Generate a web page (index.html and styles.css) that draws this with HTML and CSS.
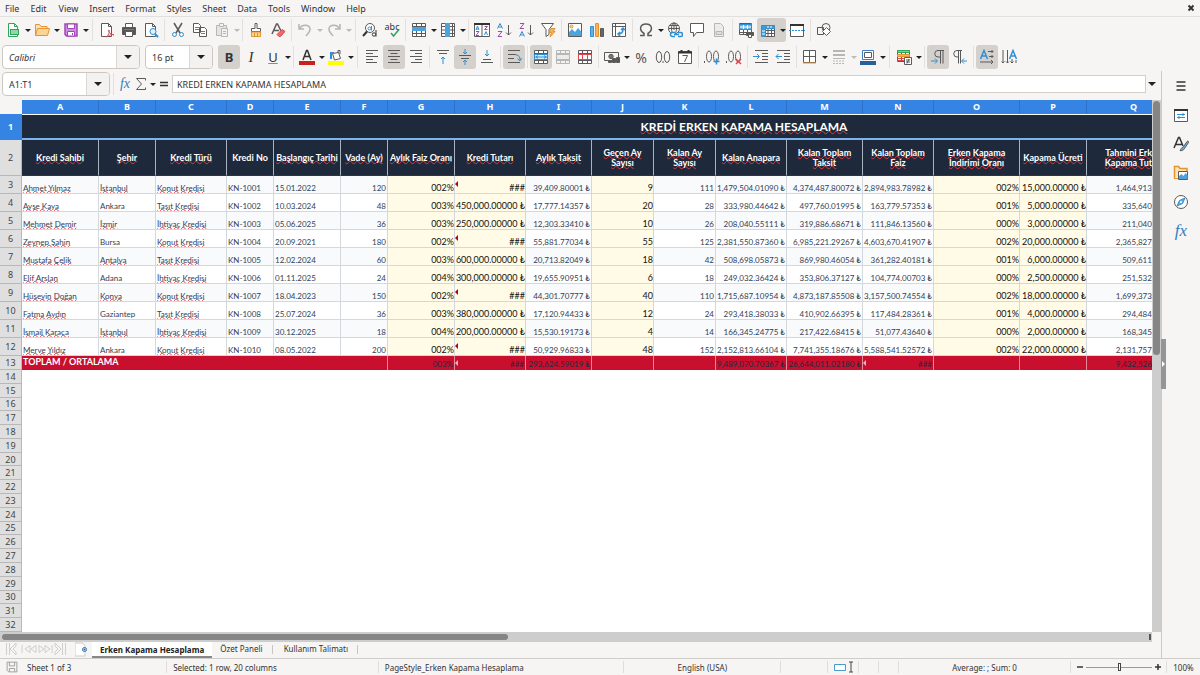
FILE: index.html
```html
<!DOCTYPE html>
<html lang="tr">
<head>
<meta charset="utf-8">
<title>Kredi Erken Kapama Hesaplama</title>
<link rel="stylesheet" href="styles.css">
</head>
<body>
<nav class="menubar" aria-label="Menu">
<button>File</button><button>Edit</button><button>View</button><button>Insert</button><button>Format</button><button>Styles</button><button>Sheet</button><button>Data</button><button>Tools</button><button>Window</button><button>Help</button>
<button class="close" aria-label="Close"><svg class="ic s8" viewBox="0 0 8 8"><path class="k w2" d="M1.500 1.500l5 5M6.500 1.500l-5 5"/></svg></button>
</nav>

<div class="toolbar" role="toolbar" aria-label="Standard">
<button class="tb" aria-label="New"><svg class="ic" viewBox="0 0 16 16"><path class="g" fill="#fff" d="M3.500 1.500h6l3 3v10h-9z"/><path class="g" d="M9.500 1.500v3h3"/><path class="fg" d="M5 7h9v6H5z"/><path stroke="#fff" d="M6 9h7M6 11h7"/></svg></button><button class="dd" aria-label="New options"></button>
<button class="tb" aria-label="Open"><svg class="ic" viewBox="0 0 16 16"><path class="o" fill="#fce3b4" d="M1.500 13.500v-11h4l1.500 2h6v3"/><path class="o" fill="#fbd591" d="M3.500 6.500h12l-2 7h-12z"/></svg></button><button class="dd" aria-label="Open options"></button>
<button class="tb" aria-label="Save"><svg class="ic" viewBox="0 0 16 16"><path class="p" fill="#c792d6" stroke-width="1.5" d="M2 2h12v12H3.500L2 12.500z"/><path fill="#fff" class="p" d="M4.500 2h7v4.500h-7zM4.500 9.500h7V14h-7z"/><path class="p" d="M9.500 11v2"/></svg></button><button class="dd" aria-label="Save options"></button>
<i class="sep wide"></i>
<button class="tb" aria-label="Export as PDF"><svg class="ic" viewBox="0 0 16 16"><path fill="#fff" d="M2.500 1.500h7l3 3v10h-10z"/><path d="M9.500 1.500v3h3"/><path class="r" d="M7.500 15c2-2 3.500-5 2.500-7-1.500 0 0 4 5 5-2-1.500-5 .5-7.500 2z"/></svg></button>
<button class="tb" aria-label="Print"><svg class="ic" viewBox="0 0 16 16"><path fill="#fff" d="M4.500 5V1.500h7V5"/><path fill="#555" d="M1.500 5.500h13v7h-13z"/><path class="b" d="M3 7.500h10"/><path fill="#fff" d="M4.500 9.500h7v5h-7z"/></svg></button>
<button class="tb" aria-label="Print preview"><svg class="ic" viewBox="0 0 16 16"><path fill="#fff" d="M2.500 1.500h7l3 3v10h-10z"/><path d="M9.500 1.500v3h3"/><circle class="b" fill="#e3f1fb" cx="10" cy="9.500" r="3"/><path class="b w2" d="M12 12l3 3"/></svg></button>
<i class="sep"></i>
<button class="tb" aria-label="Cut"><svg class="ic" viewBox="0 0 16 16"><path class="w15" d="M4 1l6 10M12 1L6 11"/><circle class="b" cx="4.500" cy="12.500" r="2"/><circle class="b" cx="11.500" cy="12.500" r="2"/></svg></button>
<button class="tb" aria-label="Copy"><svg class="ic" viewBox="0 0 16 16"><path fill="#fff" d="M1.500 1.500h5l2 2v7h-7zM7.500 5.500h5l2 2v7h-7z"/><path class="b" d="M3 5.500h4M3 7.500h4M9 9.500h4M9 11.500h4"/></svg></button>
<button class="tb off" aria-label="Paste"><svg class="ic" viewBox="0 0 16 16"><path fill="#ccc" d="M2.500 3.500h10v10h-10z"/><path fill="#eee" d="M5.500 1.500h4v3h-4zM7.500 6.500h6v8h-6z"/><path d="M9 9.500h3M9 11.500h3"/></svg></button><button class="dd off" aria-label="Paste options"></button>
<i class="sep"></i>
<button class="tb" aria-label="Clone formatting"><svg class="ic" viewBox="0 0 16 16"><path fill="#fff" d="M7 1.500h2v5h3.500v3h-9v-3H7z"/><path class="o" fill="#fbd591" d="M3.500 10h9v4.500h-9z"/><path class="o" d="M6.500 11v3M9.500 11v3"/></svg></button>
<button class="tb" aria-label="Clear formatting"><svg class="ic" viewBox="0 0 16 16"><path class="w15" d="M2 12L6.500 2h1L11 9M4 8.500h5"/><path class="r" fill="#ef6a6a" d="M7 12.500l5-5 3 2-4.500 5H9z"/></svg></button>
<i class="sep"></i>
<button class="tb off" aria-label="Undo"><svg class="ic" viewBox="0 0 16 16"><path class="w15" d="M2 2v5h5M2 7c3-5 10-5 11-.5.5 3-2 5-4 7.500"/></svg></button><button class="dd off" aria-label="Undo list"></button>
<button class="tb off" aria-label="Redo"><svg class="ic" viewBox="0 0 16 16"><path class="w15" d="M14 2v5H9M14 7C11 2 4 2 3 6.500c-.5 3 2 5 4 7.500"/></svg></button><button class="dd off" aria-label="Redo list"></button>
<i class="sep wide"></i>
<button class="tb" aria-label="Find and replace"><svg class="ic" viewBox="0 0 16 16"><circle cx="8" cy="6" r="4.500" fill="#fff"/><path class="k w2" d="M5 9.500L1 14"/><circle class="b" cx="7.500" cy="6.500" r="1.500"/><path class="b" d="M9.500 4v4.500"/><circle class="k" cx="12" cy="12.500" r="1.700" fill="#fff"/><path class="k" d="M14 8v6.500"/></svg></button>
<button class="tb" aria-label="Spelling"><span class="abc">abc</span><svg class="ic tick" viewBox="0 0 16 16"><path class="g w15" d="M7 11l2.500 3L15 7.500"/></svg></button>
<i class="sep"></i>
<button class="tb" aria-label="Row"><svg class="ic" viewBox="0 0 16 16"><path fill="#fff" d="M1.500 1.500h13v13h-13zM5.500 1v14M10.500 1v14M1 11.500h14M1 4.500h14"/><path class="fb" d="M1 5h14v4H1z"/></svg></button><button class="dd" aria-label="Row options"></button>
<button class="tb" aria-label="Column"><svg class="ic" viewBox="0 0 16 16"><path fill="#fff" d="M1.500 1.500h13v13h-13zM1 4.500h14M1 8h14M1 11.500h14M12.500 1v14"/><path class="fb" d="M5 1h5v14H5z"/></svg></button><button class="dd" aria-label="Column options"></button>
<i class="sep"></i>
<button class="tb" aria-label="Sort"><svg class="ic" viewBox="0 0 16 16"><path fill="#fff" d="M.5 1.500h15v13H.5zM8 2v12"/><path class="k w2" d="M0 2h16"/><path class="b" d="M2 8l1.500-4L5 8M2.500 7h2M10.500 13L12 9.500l1.500 3.500"/><path class="p" d="M2 9.500h3l-3 4h3M10.500 4.500h3l-3 3h3"/></svg></button>
<button class="tb" aria-label="Sort ascending"><svg class="ic" viewBox="0 0 16 16"><path class="b" d="M1.500 6.500l2.500-5 2.500 5M2.500 5h3"/><path class="p" d="M2 9.500h4l-4 5h4"/><path d="M12.500 3v10M10 10.500l2.500 2.500 2.500-2.500"/></svg></button>
<button class="tb" aria-label="Sort descending"><svg class="ic" viewBox="0 0 16 16"><path class="p" d="M2 1.500h4l-4 5h4"/><path class="b" d="M1.500 14.500l2.500-5 2.500 5M2.500 13h3"/><path d="M12.500 3v10M10 10.500l2.500 2.500 2.500-2.500"/></svg></button>
<button class="tb" aria-label="AutoFilter"><svg class="ic" viewBox="0 0 16 16"><path fill="#fff" d="M1.500 1.500h12l-4.500 6v5l-3 2v-7z"/><path class="o" fill="#f9b457" d="M11 6.500h4l-2 3h2l-5 5.500 1.500-4.500h-2z"/></svg></button>
<i class="sep"></i>
<button class="tb" aria-label="Image"><svg class="ic" viewBox="0 0 16 16"><path fill="#fff" d="M1.500 1.500h13v13h-13z"/><path class="fb" d="M2 14v-4l3-3 3 3 3-4 3.500 4v4z"/><circle cx="4.500" cy="4.500" r="1.500" class="o" fill="#fbd591"/></svg></button>
<button class="tb" aria-label="Chart"><svg class="ic" viewBox="0 0 16 16"><path class="b" fill="#63b1e5" d="M1.500 4.500h3v10h-3z"/><path class="o" fill="#f9b457" d="M6.500 1.500h3v13h-3z"/><path fill="#666" d="M11.500 6.500h3v8h-3z"/></svg></button>
<button class="tb" aria-label="Pivot table"><svg class="ic" viewBox="0 0 16 16"><path fill="#fff" d="M1.500 1.500h13v13h-13zM1.500 4.500h13M4.500 1.500v13"/><path class="b w15" d="M7 12c4 0 5-2 5-5M10 8l2-2 2 2M9 10l-2 2 2 2"/></svg></button>
<i class="sep"></i>
<button class="tb" aria-label="Special character"><svg class="ic" viewBox="0 0 16 16"><path class="w15" d="M2 13.500h4v-2C.5 8 2 2 8 2s7.500 6 2 9.500v2h4"/></svg></button><button class="dd" aria-label="Special character options"></button>
<button class="tb" aria-label="Hyperlink"><svg class="ic" viewBox="0 0 16 16"><circle cx="7" cy="6.500" r="5.500"/><ellipse cx="7" cy="6.500" rx="2.500" ry="5.500"/><path d="M1.500 6.500h11M2.500 3.500h9M7 1v7"/><path fill="#f6f5f4" class="b w15" d="M8 10.500H5.500a1.700 1.700 0 000 4H8M11 10.500h2.500a1.700 1.700 0 010 4H11M7 12.500h5"/></svg></button>
<button class="tb" aria-label="Comment"><svg class="ic" viewBox="0 0 16 16"><path fill="#fff" d="M1.500 1.500h13v9h-7l-3 4v-4h-3z"/></svg></button>
<button class="tb off" aria-label="Headers and footers"><svg class="ic" viewBox="0 0 16 16"><path fill="#ddd" d="M3.500 1.500h6l3 3v10h-9z"/><path fill="#bbb" d="M5 9.500h6v3H5z"/></svg></button>
<i class="sep"></i>
<button class="tb" aria-label="Define print area"><svg class="ic" viewBox="0 0 16 16"><path fill="#fff" d="M1.500 1.500h12v11h-12zM1.500 10.500h12M5.500 1.500v11M9.500 1.500v11"/><path fill="#63b1e5" class="b" d="M1.500 2.500h12v5h-12z"/><path stroke="#fff" d="M2 5h11M5.500 3v4M9.500 3v4"/><path fill="#555" d="M8.500 10.500h7v3h-7z"/><path fill="#fff" d="M10.500 12.500h3v3h-3z"/></svg></button>
<div class="pair on"><button class="tb" aria-label="Freeze rows and columns"><svg class="ic" viewBox="0 0 16 16"><path fill="#fff" d="M2.500 3.500h12v11h-12zM2.500 8.500h12M2.500 11.500h12M8 3v12M11.500 3v12"/><path fill="#3e9bd9" class="b" d="M1.500 3.500h13v3h-9v8h-4z"/><path stroke="#fff" d="M2 9h3M2 12h3M8 4v2M11 4v2"/></svg></button><button class="dd" aria-label="Freeze options"></button></div>
<button class="tb" aria-label="Split window"><svg class="ic" viewBox="0 0 16 16"><path fill="#fff" d="M1.500 2.500h13v12h-13z"/><path class="k w2" d="M1 3h14"/><path class="b" stroke-dasharray="2 1" d="M0 8.500h16"/></svg></button>
<i class="sep"></i>
<button class="tb" aria-label="Show draw functions"><svg class="ic" viewBox="0 0 16 16"><path d="M1.500 5.500h6v7h-6z"/><circle cx="10" cy="5.500" r="4"/><path fill="#fff" d="M10.500 5.500l4 4-4 4-4-4z"/></svg></button>
</div>

<div class="toolbar second" role="toolbar" aria-label="Formatting">
<div class="combo font"><input class="ital" aria-label="Font name" value="Calibri"><button class="dd big" aria-label="Font list"></button></div>
<div class="combo size"><input aria-label="Font size" value="16 pt"><button class="dd big" aria-label="Size list"></button></div>
<button class="tb on letter bold">B</button>
<button class="tb letter it">I</button>
<button class="tb letter ul">U</button><button class="dd" aria-label="Underline options"></button>
<i class="sep"></i>
<button class="tb" aria-label="Font color"><svg class="ic" viewBox="0 0 16 16"><path class="k w15" d="M4 11L7.500 1.500h1L12 11M5.500 7.500h5"/><path fill="#c9211e" stroke="none" d="M0 12h16v4H0z"/></svg></button><button class="dd" aria-label="Font color options"></button>
<button class="tb" aria-label="Background color"><svg class="ic" viewBox="0 0 16 16"><path fill="#fff" d="M4.500 4.500l6-1 2 6-6 1.500z"/><path class="b w2" d="M3 10V4h3"/><path d="M10 4V1.500h2V5"/><path fill="#ff0" stroke="none" d="M0 12h16v4H0z"/></svg></button><button class="dd" aria-label="Background color options"></button>
<i class="sep wide"></i>
<button class="tb" aria-label="Align left"><svg class="ic" viewBox="0 0 16 16"><path d="M2 1.500h12M2 4.500h7M2 7.500h12M2 10.500h7M2 13.500h11"/></svg></button>
<button class="tb on" aria-label="Align center"><svg class="ic" viewBox="0 0 16 16"><path d="M2 1.500h12M4.500 4.500h7M2 7.500h12M4.500 10.500h7M2 13.500h12"/></svg></button>
<button class="tb" aria-label="Align right"><svg class="ic" viewBox="0 0 16 16"><path d="M2 1.500h12M7 4.500h7M2 7.500h12M7 10.500h7M3 13.500h11"/></svg></button>
<i class="sep"></i>
<button class="tb" aria-label="Align top"><svg class="ic" viewBox="0 0 16 16"><path d="M2 1.500h12M4 4.500h8"/><path class="b" d="M8 15V8M6 10l2-2 2 2"/></svg></button>
<button class="tb on" aria-label="Center vertically"><svg class="ic" viewBox="0 0 16 16"><path d="M2 6.500h12M4 9.500h8"/><path class="b" d="M8 0v5M6 3l2 2 2-2M8 16v-5M6 13l2-2 2 2"/></svg></button>
<button class="tb" aria-label="Align bottom"><svg class="ic" viewBox="0 0 16 16"><path d="M2 13.500h12M4 10.500h8"/><path class="b" d="M8 1v6M6 5l2 2 2-2"/></svg></button>
<i class="sep"></i>
<button class="tb on" aria-label="Wrap text"><svg class="ic" viewBox="0 0 16 16"><path d="M2 1.500h12M2 5.500h8M2 9.500h6M2 13.500h12"/><path class="b" d="M10 6c3 0 4 2 4 5M11.500 9.500L14 12l1.500-3"/></svg></button>
<i class="sep"></i>
<button class="tb on" aria-label="Merge and center"><svg class="ic" viewBox="0 0 16 16"><path fill="#fff" d="M1.500 1.500h13v13h-13zM1.500 4.500h13M1.500 11.500h13M5.500 1.500v13M10.500 1.500v13"/><path fill="#d6ecfb" class="b" d="M1.500 5.500h13v5h-13z"/><path class="b" d="M2 8h12M5 6.500L3 8l2 1.500M11 6.500L13 8l-2 1.500"/></svg></button>
<button class="tb off" aria-label="Merge cells"><svg class="ic" viewBox="0 0 16 16"><path fill="#eee" d="M1.500 1.500h13v13h-13zM1.500 4.500h13M1.500 11.500h13M5.500 1.500v13M10.500 1.500v13"/><path fill="#ddd" d="M1.500 5.500h13v5h-13z"/></svg></button>
<button class="tb" aria-label="Split cells"><svg class="ic" viewBox="0 0 16 16"><path fill="#fff" d="M1.500 1.500h13v13h-13zM1.500 4.500h13M1.500 11.500h13M5.500 1.500v13M10.500 1.500v13"/><path fill="#fff" class="r" d="M1.500 5.500h13v5h-13zM5.500 5.500v5M10.500 5.500v5"/></svg></button>
<i class="sep"></i>
<button class="tb" aria-label="Currency"><svg class="ic" viewBox="0 0 16 16"><path d="M.5 3.500h14v8H.5z"/><circle cx="7" cy="7.500" r="2.200" fill="#777"/><path fill="#555" d="M4.500 11.500h3v2h-3zM8.500 9.500h3v4h-3zM12.500 8.500h3v5h-3z"/></svg></button><button class="dd" aria-label="Currency options"></button>
<button class="tb glyph">%</button>
<button class="tb" aria-label="Format as number"><svg class="ic" viewBox="0 0 16 16"><ellipse cx="4" cy="8" rx="2.700" ry="5.500"/><ellipse cx="12" cy="8" rx="2.700" ry="5.500"/><path d="M8 12v2"/></svg></button>
<button class="tb" aria-label="Format as date"><svg class="ic" viewBox="0 0 16 16"><path fill="#fff" d="M1.500 2.500h13v12h-13z"/><path class="k w2" d="M1 3.500h14M4.500 1v2M11.500 1v2"/><path d="M5.500 6.500h5l-3 6.500"/></svg></button>
<i class="sep"></i>
<button class="tb" aria-label="Add decimal place"><svg class="ic" viewBox="0 0 16 16"><path d="M.5 12v2"/><ellipse cx="5" cy="7.500" rx="2.500" ry="5.500"/><ellipse cx="12" cy="7.500" rx="2.500" ry="5.500"/><path class="b w15" d="M12.500 9.500v6M9.500 12.500h6"/></svg></button>
<button class="tb" aria-label="Delete decimal place"><svg class="ic" viewBox="0 0 16 16"><path d="M.5 12v2"/><ellipse cx="5" cy="7.500" rx="2.500" ry="5.500"/><ellipse cx="12" cy="7.500" rx="2.500" ry="5.500"/><path class="r w15" d="M10 10l5 5M15 10l-5 5"/></svg></button>
<i class="sep"></i>
<button class="tb" aria-label="Increase indent"><svg class="ic" viewBox="0 0 16 16"><path d="M2 1.500h13M9 4.500h6M9 7.500h6M9 10.500h6M2 13.500h13"/><path class="b" d="M0 7.500h6M4 5l2.500 2.500L4 10"/></svg></button>
<button class="tb" aria-label="Decrease indent"><svg class="ic" viewBox="0 0 16 16"><path d="M2 1.500h13M9 4.500h6M9 7.500h6M9 10.500h6M2 13.500h13"/><path class="b" d="M1 7.500h6M3.500 5L1 7.500 3.500 10"/></svg></button>
<i class="sep"></i>
<button class="tb" aria-label="Borders"><svg class="ic" viewBox="0 0 16 16"><path fill="#fff" d="M1.500 1.500h12v12h-12zM7.500 1.500v12M1.500 7.500h12"/><path class="o" d="M1 14h13"/></svg></button><button class="dd" aria-label="Border options"></button>
<button class="tb off" aria-label="Border style"><svg class="ic" viewBox="0 0 16 16"><path class="w2" d="M2 2h12M2 6h12"/><path d="M2 9.500h12"/><path stroke-dasharray="2 1" d="M2 12h12M2 14.500h12"/></svg></button><button class="dd off" aria-label="Border style options"></button>
<button class="tb" aria-label="Border color"><svg class="ic" viewBox="0 0 16 16"><path fill="#fff" stroke="#3e7fc1" d="M2.500 1.500h11v9h-11z"/><path d="M4.500 3.500h7v5h-7z"/><path fill="#2a6099" stroke="none" d="M0 12h16v4H0z"/></svg></button><button class="dd" aria-label="Border color options"></button>
<i class="sep wide"></i>
<button class="tb" aria-label="Conditional formatting"><svg class="ic" viewBox="0 0 16 16"><path fill="#fff" d="M1.500 1.500h12v11h-12zM5.500 1.500v11M9.500 1.500v11"/><path fill="#7ccf9d" class="g" d="M1.500 1.500h12v2h-12z"/><path fill="#f9b457" class="o" d="M1.500 5.500h12v2h-12z"/><path class="r" d="M1.500 9.500h8M1.500 11.500h7"/><path fill="#fff" d="M8.500 8.500h7v7h-7z"/><path d="M10 11h4M10 13h4M13 10l-2 4.500"/></svg></button><button class="dd" aria-label="Conditional options"></button>
<i class="sep"></i>
<button class="tb on" aria-label="Left-to-right"><svg class="ic" viewBox="0 0 16 16"><path d="M14 1.500H8a3 3 0 000 6.500h2M10.500 1.500v13M13 1.500v13"/><path class="b" d="M1 12h6M5 9.500L7.500 12 5 14.500"/></svg></button>
<button class="tb" aria-label="Right-to-left"><svg class="ic" viewBox="0 0 16 16"><path d="M10 1.500H5a3 3 0 000 6.500h1.500M6.500 1.500v13M8.500 1.500v13"/><path class="b" d="M15 12h-5M12 9.500L9.500 12l2.500 2.500"/></svg></button>
<i class="sep"></i>
<button class="tb on" aria-label="Text direction horizontal"><svg class="ic" viewBox="0 0 16 16"><path class="b w15" d="M1.500 10L5 1.500 8.500 10M3 7h4"/><path d="M9 2.500h5M12.500 1L14 2.500 12.500 4M10 7.500h4M12.500 6L14 7.500 12.500 9M1 13h13M12 11l2 2-2 2"/></svg></button>
<button class="tb" aria-label="Text direction vertical"><svg class="ic" viewBox="0 0 16 16"><path class="b w15" d="M8.500 10L12 1.500 15.500 10M10 7h4"/><path d="M2 1v13M.5 12.500L2 14l1.500-1.500M6.500 1v13M5 12.500L6.500 14 8 12.500M11 10v4M9.500 12.500L11 14l1.500-1.500M15 11v3"/></svg></button>
</div>

<div class="work">
<main class="main">
<div class="formula">
<div class="combo name"><input aria-label="Name box" value="A1:T1"><button class="dd big" aria-label="Name list"></button></div>
<i class="sep"></i>
<button class="fx" aria-label="Function wizard">fx</button>
<button class="mid" aria-label="Select function"><svg class="ic" viewBox="0 0 16 16"><path d="M12.500 4.500v-2h-9l5 5.500-5 5.500h9v-2"/></svg></button><button class="dd" aria-label="Function options"></button>
<button class="mid" aria-label="Formula"><svg class="ic" viewBox="0 0 16 16"><path class="k w15" d="M4 6.500h8M4 9.500h8"/></svg></button>
<input class="entry" aria-label="Input line" value="KREDİ ERKEN KAPAMA HESAPLAMA">
<button class="dd big" aria-label="Expand formula bar"></button>
</div>
<div class="grid">
<div class="view">
<table class="sheet">
<colgroup><col class="c22"><col class="c77"><col class="c57"><col class="c71"><col class="c47"><col class="c67"><col class="c47"><col class="c67"><col class="c71"><col class="c66"><col class="c62"><col class="c62"><col class="c71"><col class="c76"><col class="c71"><col class="c86"><col class="c67"><col class="c94"><col class="c94"><col class="c94"><col></colgroup>
<thead><tr class="cols"><td></td><th>A</th><th>B</th><th>C</th><th>D</th><th>E</th><th>F</th><th>G</th><th>H</th><th>I</th><th>J</th><th>K</th><th>L</th><th>M</th><th>N</th><th>O</th><th>P</th><th>Q</th></tr></thead>
<tbody>
<tr class="title"><th>1</th><td colspan="20"><span class="sp">KREDİ</span> <span class="sp">ERKEN</span> <span class="sp">KAPAMA</span> <span class="sp">HESAPLAMA</span></td></tr>
<tr class="heads"><th>2</th><td class="sp">Kredi Sahibi</td><td class="sp">Şehir</td><td class="sp">Kredi Türü</td><td>Kredi No</td><td class="sp">Başlangıç Tarihi</td><td class="sp">Vade (Ay)</td><td class="sp">Aylık Faiz Oranı</td><td class="sp">Kredi Tutarı</td><td class="sp">Aylık Taksit</td><td class="sp">Geçen Ay<br>Sayısı</td><td class="sp">Kalan Ay<br>Sayısı</td><td class="sp">Kalan Anapara</td><td class="sp">Kalan Toplam<br>Taksit</td><td class="sp">Kalan Toplam<br>Faiz</td><td class="sp">Erken Kapama<br>İndirimi Oranı</td><td class="sp">Kapama Ücreti</td><td class="sp">Tahmini Erken<br>Kapama Tutarı</td></tr>
<tr class="d"><th>3</th><td class="sp">Ahmet Yılmaz</td><td class="sp">İstanbul</td><td class="sp">Konut Kredisi</td><td>KN-1001</td><td>15.01.2022</td><td class="n">120</td><td class="y">002%</td><td class="y more">###</td><td class="n">39,409.80001 ₺</td><td class="y">9</td><td class="n">111</td><td class="n">1,479,504.01090 ₺</td><td class="n">4,374,487.80072 ₺</td><td class="n">2,894,983.78982 ₺</td><td class="y">002%</td><td class="y">15,000.00000 ₺</td><td class="n">1,464,913.8007 ₺</td></tr>
<tr class="d"><th>4</th><td class="sp">Ayşe Kaya</td><td>Ankara</td><td class="sp">Taşıt Kredisi</td><td>KN-1002</td><td>10.03.2024</td><td class="n">48</td><td class="y">003%</td><td class="y">450,000.00000 ₺</td><td class="n">17,777.14357 ₺</td><td class="y">20</td><td class="n">28</td><td class="n">333,980.44642 ₺</td><td class="n">497,760.01995 ₺</td><td class="n">163,779.57353 ₺</td><td class="y">001%</td><td class="y">5,000.00000 ₺</td><td class="n">335,640.5419 ₺</td></tr>
<tr class="d"><th>5</th><td class="sp">Mehmet Demir</td><td class="sp">İzmir</td><td class="sp">İhtiyaç Kredisi</td><td>KN-1003</td><td>05.06.2025</td><td class="n">36</td><td class="y">003%</td><td class="y">250,000.00000 ₺</td><td class="n">12,303.33410 ₺</td><td class="y">10</td><td class="n">26</td><td class="n">208,040.55111 ₺</td><td class="n">319,886.68671 ₺</td><td class="n">111,846.13560 ₺</td><td class="y">000%</td><td class="y">3,000.00000 ₺</td><td class="n">211,040.5511 ₺</td></tr>
<tr class="d"><th>6</th><td class="sp">Zeynep Şahin</td><td>Bursa</td><td class="sp">Konut Kredisi</td><td>KN-1004</td><td>20.09.2021</td><td class="n">180</td><td class="y">002%</td><td class="y more">###</td><td class="n">55,881.77034 ₺</td><td class="y">55</td><td class="n">125</td><td class="n">2,381,550.87360 ₺</td><td class="n">6,985,221.29267 ₺</td><td class="n">4,603,670.41907 ₺</td><td class="y">002%</td><td class="y">20,000.00000 ₺</td><td class="n">2,365,827.1148 ₺</td></tr>
<tr class="d"><th>7</th><td class="sp">Mustafa Çelik</td><td class="sp">Antalya</td><td class="sp">Taşıt Kredisi</td><td>KN-1005</td><td>12.02.2024</td><td class="n">60</td><td class="y">003%</td><td class="y">600,000.00000 ₺</td><td class="n">20,713.82049 ₺</td><td class="y">18</td><td class="n">42</td><td class="n">508,698.05873 ₺</td><td class="n">869,980.46054 ₺</td><td class="n">361,282.40181 ₺</td><td class="y">001%</td><td class="y">6,000.00000 ₺</td><td class="n">509,611.0781 ₺</td></tr>
<tr class="d"><th>8</th><td class="sp">Elif Arslan</td><td>Adana</td><td class="sp">İhtiyaç Kredisi</td><td>KN-1006</td><td>01.11.2025</td><td class="n">24</td><td class="y">004%</td><td class="y">300,000.00000 ₺</td><td class="n">19,655.90951 ₺</td><td class="y">6</td><td class="n">18</td><td class="n">249,032.36424 ₺</td><td class="n">353,806.37127 ₺</td><td class="n">104,774.00703 ₺</td><td class="y">000%</td><td class="y">2,500.00000 ₺</td><td class="n">251,532.3642 ₺</td></tr>
<tr class="d"><th>9</th><td class="sp">Hüseyin Doğan</td><td class="sp">Konya</td><td class="sp">Konut Kredisi</td><td>KN-1007</td><td>18.04.2023</td><td class="n">150</td><td class="y">002%</td><td class="y more">###</td><td class="n">44,301.70777 ₺</td><td class="y">40</td><td class="n">110</td><td class="n">1,715,687.10954 ₺</td><td class="n">4,873,187.85508 ₺</td><td class="n">3,157,500.74554 ₺</td><td class="y">002%</td><td class="y">18,000.00000 ₺</td><td class="n">1,699,373.3673 ₺</td></tr>
<tr class="d"><th>10</th><td class="sp">Fatma Aydın</td><td>Gaziantep</td><td class="sp">Taşıt Kredisi</td><td>KN-1008</td><td>25.07.2024</td><td class="n">36</td><td class="y">003%</td><td class="y">380,000.00000 ₺</td><td class="n">17,120.94433 ₺</td><td class="y">12</td><td class="n">24</td><td class="n">293,418.38033 ₺</td><td class="n">410,902.66395 ₺</td><td class="n">117,484.28361 ₺</td><td class="y">001%</td><td class="y">4,000.00000 ₺</td><td class="n">294,484.1965 ₺</td></tr>
<tr class="d"><th>11</th><td class="sp">İsmail Karaca</td><td class="sp">İstanbul</td><td class="sp">İhtiyaç Kredisi</td><td>KN-1009</td><td>30.12.2025</td><td class="n">18</td><td class="y">004%</td><td class="y">200,000.00000 ₺</td><td class="n">15,530.19173 ₺</td><td class="y">4</td><td class="n">14</td><td class="n">166,345.24775 ₺</td><td class="n">217,422.68415 ₺</td><td class="n">51,077.43640 ₺</td><td class="y">000%</td><td class="y">2,000.00000 ₺</td><td class="n">168,345.2477 ₺</td></tr>
<tr class="d"><th>12</th><td class="sp">Merve Yıldız</td><td>Ankara</td><td class="sp">Konut Kredisi</td><td>KN-1010</td><td>08.05.2022</td><td class="n">200</td><td class="y">002%</td><td class="y more">###</td><td class="n">50,929.96833 ₺</td><td class="y">48</td><td class="n">152</td><td class="n">2,152,813.66104 ₺</td><td class="n">7,741,355.18676 ₺</td><td class="n">5,588,541.52572 ₺</td><td class="y">002%</td><td class="y">22,000.00000 ₺</td><td class="n">2,131,757.3878 ₺</td></tr>
<tr class="total"><th>13</th><td colspan="6">TOPLAM / ORTALAMA</td><td class="n">003%</td><td class="n more">###</td><td class="n">293,624.59019 ₺</td><td></td><td></td><td class="n">9,489,070.70367 ₺</td><td class="n">26,644,011.02180 ₺</td><td class="n more">###</td><td></td><td></td><td class="n">9,432,526.6507 ₺</td></tr>
<tr><th>14</th></tr><tr><th>15</th></tr><tr><th>16</th></tr><tr><th>17</th></tr><tr><th>18</th></tr><tr><th>19</th></tr><tr><th>20</th></tr><tr><th>21</th></tr><tr><th>22</th></tr><tr><th>23</th></tr><tr><th>24</th></tr><tr><th>25</th></tr><tr><th>26</th></tr><tr><th>27</th></tr><tr><th>28</th></tr><tr><th>29</th></tr><tr><th>30</th></tr><tr><th>31</th></tr><tr><th>32</th></tr>
</tbody>
</table>
</div>
<div class="vscroll"><div class="vthumb"></div></div>
</div>
<div class="hscroll"><div class="hthumb"></div><div class="hsplit"></div></div>
<div class="tabs">
<div class="tabnav"><svg viewBox="0 0 60 14"><path d="M.5 1v12M3.500 1v12M4 7l6-6v3L7 7l3 3v3zM16 3v8M24 3.500v7L19 7zM30 3.500v7L25 7zM33 3.500v7L38 7zM39 3.500v7L44 7zM46 3v8M55 7l-6-6v3l3 3-3 3v3zM56.500 1v12M59.500 1v12"/></svg></div>
<button class="addtab" aria-label="Add sheet"><svg class="ic" viewBox="0 0 16 16"><path fill="#fff" stroke="#ccc" d="M0 1h8l2 3v10H0z"/><circle cx="9.500" cy="7.500" r="2" fill="#fff" stroke="#2a6ab5"/><path stroke="#2a6ab5" d="M9.500 6.500v2M8.500 7.500h2"/></svg></button>
<button class="tab active">Erken Kapama Hesaplama</button><button class="tab">Özet Paneli</button><button class="tab">Kullanım Talimatı</button>
</div>
</main>
<aside class="side">
<div class="handle"></div>
<button aria-label="Sidebar settings"><svg class="ic" viewBox="0 0 16 16"><path class="k w15" d="M3.500 4h9M3.500 8h9M3.500 12h9"/></svg></button>
<button aria-label="Properties"><svg class="ic" viewBox="0 0 16 16"><path fill="#fff" d="M1.500 2.500h13v12h-13z"/><path class="k w2" d="M1 3h14"/><path class="b" d="M4 7.500h8M4 10.500h8M10 6v3M6 9v3"/></svg></button>
<button aria-label="Styles"><svg class="ic" viewBox="0 0 16 16"><path class="k w15" d="M1 12L5.500 1.500h1L10 10M3 8.500h6"/><path fill="#63b1e5" d="M7 14.500c1-1 1-3 3-3l4-6c1-1 2 0 1.500 1l-4 6c-1 2-3 2.500-4.500 2z"/></svg></button>
<button aria-label="Gallery"><svg class="ic" viewBox="0 0 16 16"><path class="o w15" fill="#fce3b4" d="M1.500 13V1.500h4l1.500 2h7V6"/><path fill="#fff" d="M5.500 6.500h9v8h-9z"/><path class="fb" d="M6 14v-3l2.500-2 2 2 2-3 2 2v4z"/><path class="o" d="M1 13.500h4"/></svg></button>
<button aria-label="Navigator"><svg class="ic" viewBox="0 0 16 16"><circle cx="8" cy="8" r="6.500" fill="#fff"/><path class="b" fill="#63b1e5" d="M12 4L9.500 9.500 4 12l2.500-5.500z"/><circle cx="8" cy="8" r="1" fill="#fff" stroke="none"/></svg></button>
<button class="fx" aria-label="Functions">fx</button>
</aside>
</div>

<footer class="status">
<div class="st save"><svg class="ic s12" viewBox="0 0 16 16"><path stroke="#888" d="M1.500 1.500h13v13h-11l-2-2zM4.500 1.500v5h7v-5M4.500 14v-4h7v4"/></svg></div>
<div class="st s1">Sheet 1 of 3</div><div class="st s2">Selected: 1 row, 20 columns</div><div class="st s3">PageStyle_Erken Kapama Hesaplama</div><div class="st s4">English (USA)</div><div class="st s5"></div>
<div class="st s6"><svg class="sel" viewBox="0 0 20 12"><path fill="#fff" stroke="#4a9bc9" d="M.5 3.500h11v6H.500z"/><path stroke="#444" d="M15 1h4M17 1v10M15 11h4"/></svg></div>
<div class="st s7"></div><div class="st s7"></div>
<div class="st s8">Average: ; Sum: 0</div>
<div class="st zoom"><button aria-label="Zoom out"><svg class="ic s8" viewBox="0 0 8 8"><path class="k w15" d="M1 4h6"/></svg></button><input type="range" aria-label="Zoom" min="0" max="100" value="50"><button aria-label="Zoom in"><svg class="ic s8" viewBox="0 0 8 8"><path class="k w15" d="M1 4h6M4 1v6"/></svg></button></div>
<div class="st pct">100%</div>
</footer>
</body>
</html>
```
FILE: styles.css
```css
* { box-sizing: border-box; }
html, body { height: 100%; }
body {
  margin: 0;
  display: flex;
  flex-direction: column;
  overflow: hidden;
  background: #f6f5f4;
  color: #333;
  font: 9px "Noto Sans", "Open Sans", sans-serif;
}
button, input { font: inherit; color: inherit; margin: 0; padding: 0; border: 0; background: none; }
button { display: flex; align-items: center; justify-content: center; flex: none; }

/* Icons */
.ic { width: 16px; height: 16px; fill: none; stroke: #5a5a5a; stroke-width: 1; flex: none; }
.ic.s8 { width: 8px; height: 8px; }
.ic.s12 { width: 12px; height: 12px; }
.ic .k { stroke: #333; }
.ic .b { stroke: #2f8fd3; }
.ic .g { stroke: #2fa65a; }
.ic .o { stroke: #e59433; }
.ic .p { stroke: #a545b8; }
.ic .r { stroke: #e0454b; }
.ic .fb { fill: #4da3dc; stroke: none; }
.ic .fg { fill: #2fa65a; stroke: none; }
.ic .w15 { stroke-width: 1.5; }
.ic .w2 { stroke-width: 2; }
.off .ic { opacity: .4; }

/* Menu bar */
.menubar { display: flex; height: 17px; flex: none; border-bottom: 1px solid #e2e0de; }
.menubar button { padding: 0 6px 0 5px; }
.menubar button:nth-child(n+3) { padding-left: 6px; padding-right: 5px; }
.menubar .close { margin-left: auto; }

/* Toolbars */
.toolbar { display: flex; align-items: center; height: 26px; flex: none; padding-left: 2px; }
.tb { position: relative; width: 22px; height: 24px; border-radius: 3px; }
.on { background: #d4d0cc; border-radius: 3px; }
.pair { display: flex; }
.dd { width: 7px; height: 24px; }
.dd::after { content: ""; border: 3px solid transparent; border-top: 3px solid #222; border-bottom: 0; }
.dd.off::after { border-top-color: #bbb; }
.dd.big::after { border-width: 4px 4px 0; }
.sep { width: 1px; height: 22px; margin: 0 2px; background: #e2e0de; flex: none; }
.sep.wide { margin: 0 3px; }
.second { height: 28px; }
.letter { font-size: 13px; }
.bold { font-weight: 700; }
.it { font-family: "Liberation Serif", serif; font-style: italic; font-size: 15px; }
.ul { text-decoration: underline; text-decoration-color: #4d9fd9; }
.glyph { font-size: 14px; color: #555; }
.abc { font-size: 9px; line-height: 16px; padding-bottom: 6px; }
.tick { position: absolute; left: 3px; top: 4px; }

.combo { display: flex; height: 24px; border: 1px solid #cdc7c2; border-radius: 4px; background: #fff; overflow: hidden; flex: none; }
.combo input { flex: 1; min-width: 0; padding-left: 6px; outline: 0; }
.combo .dd { width: 23px; height: 22px; background: #f3f2f1; border-left: 1px solid #dad6d2; }
.ital { font-style: italic; }
.font { width: 138px; margin-right: 5px; }
.size { width: 68px; margin-right: 5px; }
.name { width: 108px; }

/* Work area */
.work { display: flex; flex: 1; min-height: 0; }
.main { display: flex; flex-direction: column; flex: 1; min-width: 0; }
.formula { display: flex; align-items: center; height: 29px; flex: none; padding: 0 3px 3px 2px; }
.formula .sep { margin: 0 3px; }
.formula .dd.big { width: 12px; }
.formula .combo .dd.big { width: 23px; }
.fx { width: 16px; font: italic 14px "Liberation Serif", serif; color: #2f7fc0; }
.mid { width: 16px; }
.entry { flex: 1; min-width: 0; height: 18px; padding: 0 4px; background: #fff; border: 1px solid #d2cfcc; outline: 0; }

.grid { display: flex; flex: 1; min-height: 0; }
.view { flex: 1; min-width: 0; overflow: hidden; background: #fff; }
.vscroll { width: 9px; flex: none; background: #cdcdcd; padding: 1px; }
.vthumb { height: 48%; background: #858585; border-radius: 4px; }
.hscroll { display: flex; align-items: center; height: 10px; flex: none; background: #cdcdcd; padding: 0 1px 0 2px; margin-right: 9px; }
.hthumb { width: 44%; height: 6px; border-radius: 3px; background: #858585; }
.hsplit { width: 2px; height: 6px; margin-left: auto; background: #555; }

/* Spreadsheet */
.sheet { width: 1466px; height: 100%; table-layout: fixed; border-collapse: separate; border-spacing: 0; font-family: Lato, "Noto Sans", sans-serif; font-size: 8px; line-height: 10px; }
.sheet th, .sheet td { padding: 0; white-space: nowrap; overflow: hidden; }
.sheet th { font: 9px/11px "Noto Sans", sans-serif; color: #444; background: #dfdfdf; border-right: 1px solid #b8b8b8; border-bottom: 1px solid #b8b8b8; }
.c22 { width: 22px; } .c47 { width: 47px; } .c57 { width: 57px; } .c62 { width: 62px; } .c66 { width: 66px; } .c67 { width: 67px; }
.c71 { width: 71px; } .c76 { width: 76px; } .c77 { width: 77px; } .c86 { width: 86px; } .c94 { width: 94px; }
.sheet .cols { height: 14px; }
.sheet .cols td { background: #f6f5f4; }
.sheet .cols th { background: #3584e4; color: #fff; font-weight: 700; border-color: #2c72c8; border-bottom: 0; padding-bottom: 2px; }
.sheet .title { height: 26px; }
.sheet .title th { background: #3584e4; color: #fff; font-weight: 700; border-color: #3584e4; }
.sheet .title td { background: #1e293b; color: #fff; font-size: 12px; font-weight: 700; line-height: 16px; text-align: center; border-top: 1px solid #fff; border-bottom: 2px solid #7db4f0; }
.sheet .heads { height: 36px; }
.sheet .heads td { background: #1e293b; color: #fff; font-size: 9px; font-weight: 700; text-align: center; border-right: 1px solid #a9b3c0; border-bottom: 1px solid #333; }
.sheet .d { height: 18px; }
.sheet .d td { padding: 0 1px; line-height: 9px; vertical-align: bottom; color: #334155; border-right: 1px solid #d3d8de; border-bottom: 1px solid #d3d8de; }
.sheet .d:nth-child(odd) td { background: #f8fafc; }
.sheet .d td.y, .sheet .d:nth-child(odd) td.y { background: #fffbe6; color: #111; font-size: 9px; text-align: right; padding: 0 0 1px; }
.sheet td.n { text-align: right; }
.sheet .sp { text-decoration: underline wavy #e5383b 1px; text-underline-offset: -1px; text-decoration-skip-ink: none; }
.sheet td.more { position: relative; }
.sheet td.more::before { content: ""; position: absolute; left: 0; top: 5px; border: 3px solid transparent; border-left: 0; border-right-color: #b00020; }
.sheet .total { height: 14px; }
.sheet .total td { background: #c8102e; color: #1e293b; border-right: 1px solid #e58a98; padding: 2px 1px 0; }
.sheet .total td[colspan] { color: #fff; font-size: 9px; font-weight: 700; padding: 0 1px 2px; }
.sheet .total td.more::before { border-right-color: #f3b6bf; top: 4px; }

/* Sheet tabs */
.tabs { display: flex; height: 16px; flex: none; font-size: 8px; }
.tabnav { width: 74px; padding: 0 8px 2px 6px; }
.tabnav svg { display: block; width: 60px; height: 14px; fill: none; stroke: #d0cecb; }
.addtab { width: 18px; }
.tab { padding: 0 8px 1px; position: relative; }
.tab.active { background: #fff; font-weight: 700; border-bottom: 2px solid #888; color: #222; padding-bottom: 0; }
.tab:not(.active) { padding-right: 9px; margin: 0 3px 2px 0; border-right: 1px solid #c9c6c2; height: 9px; align-self: center; }

/* Sidebar */
.side { position: relative; width: 39px; flex: none; display: flex; flex-direction: column; align-items: center; border-left: 1px solid #c9c9c9; }
.side button { width: 30px; height: 29px; }
.side .fx { font-size: 17px; }
.handle { position: absolute; left: -1px; top: 268px; width: 5px; height: 50px; background: #959595; }
.handle::after { content: ""; position: absolute; left: 1px; top: 22px; border: 3px solid transparent; border-left-color: #fff; border-right: 0; }

/* Status bar */
.status { display: flex; align-items: center; height: 17px; flex: none; border-top: 1px solid #cfcdca; font-size: 8px; }
.st { display: flex; align-items: center; height: 12px; min-width: 0; white-space: nowrap; border-right: 1px solid #e0deda; padding-left: 6px; }
.save { width: 21px; border: 0; }
.s1 { flex: 140 1 0; }
.s2 { flex: 206 1 0; }
.s3 { flex: 240 1 0; }
.s4 { flex: 157 1 0; justify-content: center; padding: 0; }
.s5 { flex: 40 1 0; }
.s6 { width: 31px; }
.s7 { width: 20px; }
.s8 { flex: 172 1 0; justify-content: center; padding: 0; }
.sel { width: 20px; height: 12px; fill: none; }
.zoom { width: 96px; padding-left: 5px; }
.zoom input { width: 66px; height: 10px; margin: 0 2px; appearance: none; background: linear-gradient(#999, #999) center / 100% 1px no-repeat; }
.zoom input::-webkit-slider-thumb { appearance: none; width: 3px; height: 8px; background: #fff; border: 1px solid #444; }
.pct { width: 33px; padding: 0; justify-content: center; border: 0; }
```
